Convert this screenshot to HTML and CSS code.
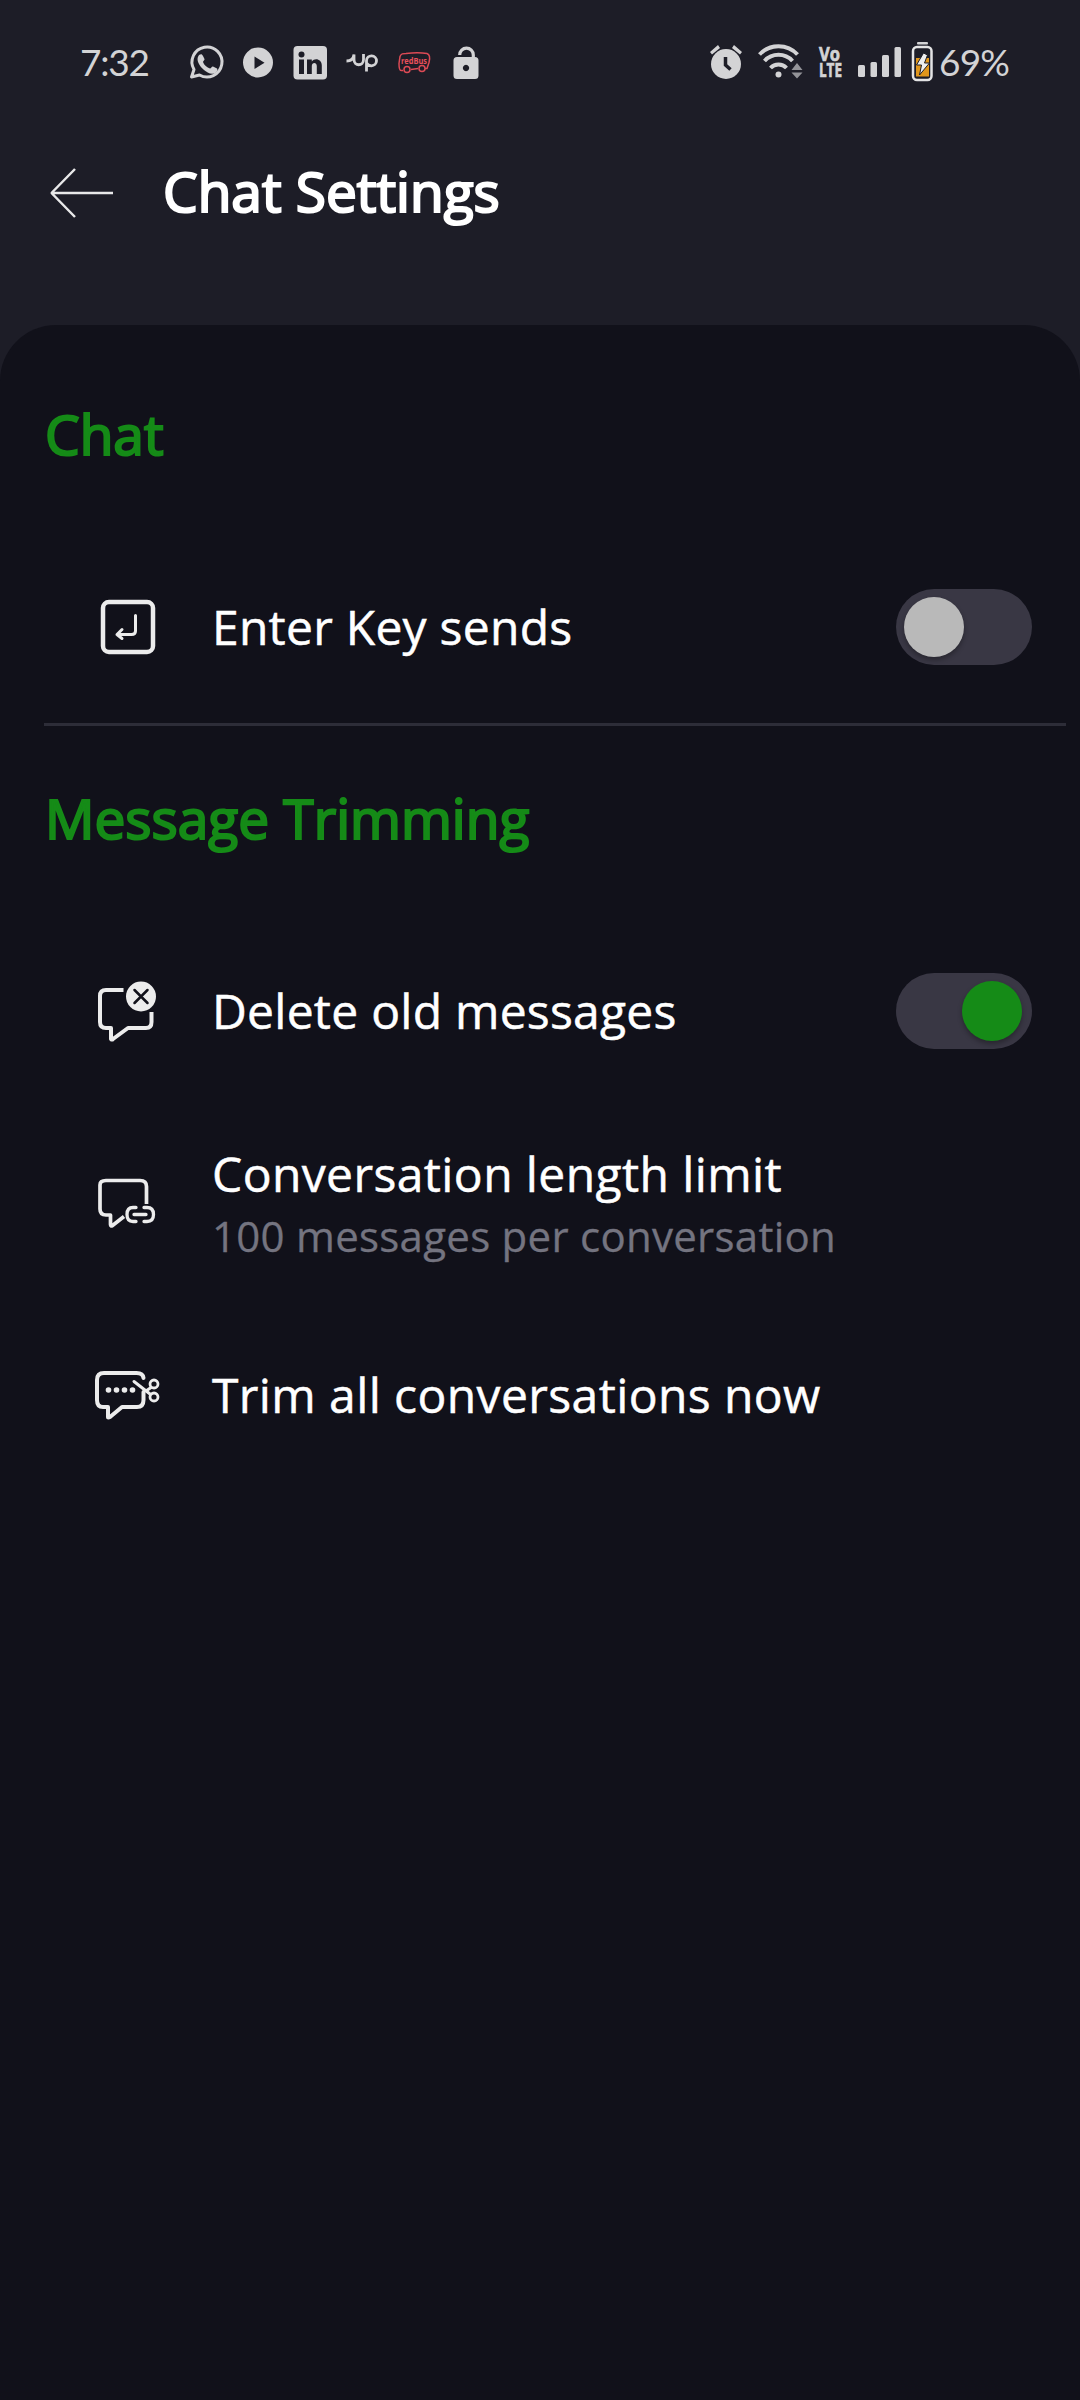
FILE: index.html
```html
<!DOCTYPE html>
<html lang="en">
<head>
<meta charset="utf-8">
<title>Chat Settings</title>
<link rel="stylesheet" href="styles.css">
</head>
<body>
<div class="status">
  <span class="clock">7:32</span>
  <svg class="notifications" width="294" height="44" viewBox="188 40 294 44">
    <g fill="none" stroke="#d3d3d5" stroke-width="3">
      <path d="M191.500 77 194 69.500A15 15 0 1 1 199.500 75Z" stroke-linejoin="round"/>
    </g>
    <path fill="#d3d3d5" d="M199 55c2-1 3-1 4 1l1.500 3c.5 1-1.500 2-1.500 3 1 3 4 5.500 7 6.500 1 0 2-2.500 3-2l4 2c1 1 0 3-1 4-4 3-9 0-12-2.500-4-3.500-9-10-5-15Z"/>
    <circle cx="258" cy="62.500" r="15" fill="#d3d3d5"/>
    <path d="M254.500 56.500v12.500l10-6.200Z" fill="#1d1d27"/>
    <rect x="293.500" y="46" width="33.500" height="33.500" rx="4" fill="#d3d3d5"/>
    <g fill="#1d1d27"><circle cx="301.500" cy="54.500" r="3"/><path d="M299 59.500h5v14.500h-5zM307 59.500h4.800v2c3-4 10-2.500 10 4v8.500h-5v-8c0-4-5-4-5 0v8h-4.800z"/></g>
    <path d="M346.500 61c5 0 7-3 7.500-6.500v5c0 7 9.500 7 9.500 0v-5.500M366.500 71.500v-11a5 5 0 1 1 5 5.300c-2 0-4-1-5-2.800" fill="none" stroke="#d3d3d5" stroke-width="2.800"/>
    <g stroke="#dc4a55" fill="none" stroke-width="1.500"><path d="M403 70.500h-2c-2 0-2-4-2-7l1-7c1-3 3-3 6-3 8-1 15-1 21 0 3 1 3 5 2 9l-2 6h-2M411 69.500l7-1"/><circle cx="407" cy="69.500" r="3"/><circle cx="422" cy="68.500" r="3"/></g>
    <text x="401" y="64" class="bus" textLength="26" lengthAdjust="spacingAndGlyphs">redBus</text>
    <path d="M459.700 55a6.800 6.800 0 0 1 13.600 0v3" fill="none" stroke="#d3d3d5" stroke-width="3.200"/>
    <path fill="#d3d3d5" fill-rule="evenodd" d="M457 57h18a3.500 3.500 0 0 1 3.500 3.500v15a3.500 3.500 0 0 1-3.500 3.500h-18a3.500 3.500 0 0 1-3.500-3.500v-15a3.500 3.500 0 0 1 3.500-3.500ZM466 64.800a3.200 3.200 0 1 0 .01 0Z"/>
  </svg>
  <svg class="system" width="228" height="44" viewBox="708 40 228 44">
    <g fill="#d3d3d5"><circle cx="726" cy="64" r="15"/><path d="M710 52l8-7 2 3-8 6.500zM742 52l-8-7-2 3 8 6.500z"/></g>
    <path d="M725.500 57v8l5 4.500" fill="none" stroke="#1d1d27" stroke-width="3.500"/>
    <g fill="none" stroke="#d3d3d5" stroke-width="4"><path d="M759.500 54.500a26 26 0 0 1 38 0M764.500 61a19 19 0 0 1 28 0M770.500 68a11 11 0 0 1 16 0"/></g>
    <g fill="#d3d3d5"><circle cx="778.500" cy="74.500" r="3"/><path opacity=".65" d="M791.500 70h11l-5.500-7zM791.500 72.500h11l-5.500 6z"/></g>
    <g class="volte"><text x="819" y="61" textLength="21" lengthAdjust="spacingAndGlyphs">Vo</text><text x="819" y="77" textLength="23" lengthAdjust="spacingAndGlyphs">LTE</text></g>
    <g fill="#d3d3d5"><rect x="858" y="65" width="7" height="12" rx="1.500"/><rect x="870.500" y="62" width="6.500" height="15" rx="1.500"/><rect x="882" y="55" width="7" height="22" rx="1.500"/><rect x="894.500" y="47" width="6.500" height="30" rx="1.500"/><rect x="917" y="42" width="11" height="2.500" rx="1"/></g>
    <rect x="913" y="47" width="18.500" height="33" rx="4" fill="none" stroke="#e4e4e5" stroke-width="2.500"/>
    <path fill="#e0961c" d="M916 58h13v18.500h-13z"/>
    <path fill="#eee" stroke="#1d1d27" stroke-width="1" d="M923.500 53l-7 12h5l-2 10 10-12h-5l3-8Z"/>
  </svg>
  <span class="battery">69%</span>
</div>
<header class="header">
  <svg class="back" width="66" height="52" viewBox="48 167 66 52"><path d="M113 193H51.500M75 169 51.500 193l23.500 24" fill="none" stroke="#e8e8e9" stroke-width="2.500" stroke-linejoin="bevel"/></svg>
  <h1 class="title">Chat Settings</h1>
</header>
<main class="panel">
  <h2 class="section section-chat">Chat</h2>
  <div class="row row-enter">
    <svg class="icon" width="80" height="60" viewBox="90 597 80 60" fill="none" stroke="#ececec" stroke-linecap="round" stroke-linejoin="round"><rect x="103" y="602" width="50" height="50" rx="6" stroke-width="4.500"/><path d="M135.500 615.500v15.500q0 3.500-4 3.500H117M122 629.500l-5 5 5 4" stroke-width="3"/></svg>
    <span class="label">Enter Key sends</span>
    <span class="toggle"><span class="knob"></span></span>
  </div>
  <h2 class="section section-trim">Message Trimming</h2>
  <div class="row row-delete">
    <svg class="icon" width="80" height="64" viewBox="90 979 80 64" fill="none" stroke="#ececec" stroke-linecap="round" stroke-linejoin="round"><path d="M123.500 990H106q-6 0-6 6v26q0 6 6 6h5v11q1 1 2 0l15-11h18q5.500 0 5.500-6v-10" stroke-width="4" stroke-linecap="butt"/><circle cx="141" cy="996.500" r="15" fill="#ececec" stroke="none"/><path d="M134.500 990l13 13M147.500 990l-13 13" stroke="#11111a" stroke-width="2.500"/></svg>
    <span class="label">Delete old messages</span>
    <span class="toggle on"><span class="knob"></span></span>
  </div>
  <div class="row row-limit">
    <svg class="icon" width="80" height="60" viewBox="90 1173 80 60" fill="none" stroke="#ececec" stroke-linecap="round" stroke-linejoin="round"><path d="M124 1216.500l-11.500 9q-2 1-2-1v-9.500H106q-6 0-6-6v-24q0-4.500 6-4.500h34q6.500 0 6.500 6V1204" stroke-width="3.700" stroke-linecap="butt"/><path d="M136 1207.500h-3q-6 0-6 7t6 7h3M144 1207.500h3q6.500 0 6.500 7t-6.500 7h-3M134 1214.500h12" stroke-width="3.300"/></svg>
    <span class="texts"><span class="label wide">Conversation length limit</span><span class="sub">100 messages per conversation</span></span>
  </div>
  <div class="row row-now">
    <svg class="icon" width="80" height="60" viewBox="90 1365 80 60" fill="none" stroke="#ececec" stroke-linecap="round" stroke-linejoin="round"><path d="M143.500 1378q-.5-5-7-5H104q-7 0-7 7v20q0 7 6 7h5v10q0 1 2 0l12-10h15q6.500 0 6.500-7v-8" stroke-width="4"/><g fill="#ececec" stroke="none"><circle cx="108.500" cy="1390" r="2.800"/><circle cx="116.500" cy="1390" r="2.800"/><circle cx="124.500" cy="1390" r="2.800"/><circle cx="132.500" cy="1390" r="2.800"/></g><path d="M134 1381.500l16 12.500M146 1391l5-3.500" stroke-width="3"/><circle cx="154" cy="1384" r="4" stroke-width="2.800"/><circle cx="154" cy="1397" r="4" stroke-width="2.800"/></svg>
    <span class="label wide">Trim all conversations now</span>
  </div>
</main>
</body>
</html>
```
FILE: styles.css
```css
* { box-sizing: border-box; }
body { margin: 0; width: 1080px; height: 2400px; background: #1d1d27; font-family: "Open Sans", sans-serif; color: #fff; display: flex; flex-direction: column; overflow: hidden; }
.status { height: 124px; display: flex; align-items: center; padding-left: 80px; font-family: Lato, sans-serif; font-size: 37px; color: #d3d3d5; white-space: nowrap; }
.clock { width: 108px; letter-spacing: -1.2px; padding-bottom: 2px; }
.notifications { margin-right: 226px; flex: none; }
.system { flex: none; }
.battery { margin-left: 3px; letter-spacing: -0.8px; padding-bottom: 2px; }
.bus { font: bold 9px "Open Sans", sans-serif; fill: #e8505b; }
.volte { font: bold 19.5px "Open Sans", sans-serif; fill: #d3d3d5; stroke: #d3d3d5; stroke-width: 0.7px; }
.header { height: 201px; display: flex; padding: 43px 0 0 48px; gap: 49px; align-items: flex-start; flex: none; }
.title { margin: -14px 0 0; font-size: 55px; line-height: 76px; font-weight: 400; -webkit-text-stroke: 2.2px currentColor; white-space: nowrap; }
.panel { flex: 1; border-radius: 56px 56px 0 0; background: #11111a; display: flex; flex-direction: column; }
.section { margin: 0 14px 0 44px; padding-left: 1px; font-size: 55px; line-height: 76px; font-weight: 400; -webkit-text-stroke: 2.2px currentColor; color: #158b17; }
.section-chat { margin-top: 71px; }
.section-trim { border-top: 3px solid #2d2d38; padding-top: 54px; }
.row { display: flex; align-items: center; padding: 0 48px 0 90px; }
.row-enter { height: 192px; margin-top: 59px; }
.row-delete { height: 192px; margin-top: 59px; }
.row-limit { height: 192px; }
.row-now { height: 192px; }
.icon { flex: none; margin-right: 42px; }
.label { font-size: 48px; line-height: 64px; letter-spacing: 0.25px; -webkit-text-stroke: 0.5px currentColor; white-space: nowrap; }
.wide { letter-spacing: 0.4px; }
.texts { display: flex; flex-direction: column; padding-top: 2px; }
.sub { font-size: 42px; line-height: 60px; letter-spacing: 0.27px; color: #747480; -webkit-text-stroke: 0.3px currentColor; white-space: nowrap; }
.toggle { margin-left: auto; width: 136px; height: 76px; border-radius: 38px; background: #393744; padding: 8px; display: flex; }
.knob { width: 60px; height: 60px; border-radius: 50%; background: #b9b9b9; box-shadow: 0 3px 5px rgba(0,0,0,.3); }
.on { justify-content: flex-end; padding-right: 10px; }
.on .knob { background: #158b17; }
```
